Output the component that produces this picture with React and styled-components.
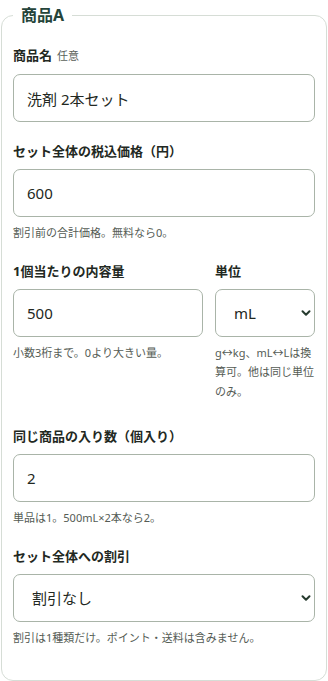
import React, { useState } from "react";
import styled, { createGlobalStyle } from "styled-components";

const GlobalStyle = createGlobalStyle`
  html, body {
    margin: 0;
    padding: 0;
    background: #ffffff;
  }
  body {
    font-family: "Noto Sans", "Noto Sans CJK JP", sans-serif;
    color: #222822;
  }
  * {
    box-sizing: border-box;
  }
`;

const Card = styled.fieldset`
  margin: 5px 1px 0;
  padding: 20px 11px 33px;
  border: 1px solid #d6ddd6;
  border-radius: 12px;
  min-width: 0;
`;

const Legend = styled.legend`
  padding: 0 8px;
  margin-left: 0;
  font-size: 16px;
  line-height: 20px;
  font-weight: 700;
  color: #25443a;
`;

const Field = styled.div`
  display: flex;
  flex-direction: column;
  min-width: 0;
  margin-bottom: ${(props) => props.$gap ?? 18}px;
`;

const Row = styled.div`
  display: grid;
  grid-template-columns: 1fr 100px;
  column-gap: 12px;
  margin-bottom: 25px;
`;

const Label = styled.label`
  display: flex;
  align-items: baseline;
  gap: 5px;
  font-size: 13px;
  line-height: 20px;
  font-weight: 700;
  color: #222822;
  margin-bottom: 8px;
  white-space: nowrap;
`;

const Optional = styled.span`
  font-size: 11px;
  font-weight: 400;
  color: #5b625b;
`;

const Input = styled.input`
  width: 100%;
  height: 48px;
  padding: 0 13px;
  border: 1px solid #a9b4a8;
  border-radius: 7px;
  background: #ffffff;
  font-family: inherit;
  font-size: 15px;
  color: #222822;
  outline: none;
`;

const SelectWrap = styled.div`
  position: relative;
`;

const Select = styled.select`
  appearance: none;
  width: 100%;
  height: 48px;
  padding: 0 28px 0 18px;
  border: 1px solid #a9b4a8;
  border-radius: 7px;
  background: #ffffff;
  font-family: inherit;
  font-size: 15px;
  color: #222822;
  outline: none;
`;

const Chevron = styled.svg`
  position: absolute;
  right: 4px;
  top: 50%;
  width: 10px;
  height: 10px;
  transform: translateY(-50%);
  pointer-events: none;
`;

const Hint = styled.p`
  margin: 6px 0 0;
  font-size: 11px;
  line-height: 19.5px;
  color: #555c55;
  line-break: anywhere;
`;

const ChevronIcon = () => (
  <Chevron viewBox="0 0 10 10">
    <path d="M1.5 3.2 L5 6.7 L8.5 3.2" fill="none" stroke="#263a2e" strokeWidth="2" strokeLinecap="round" strokeLinejoin="round" />
  </Chevron>
);

const App = () => {
  const [item, setItem] = useState({
    name: "洗剤 2本セット",
    price: "600",
    amount: "500",
    unit: "mL",
    count: "2",
    discount: "none",
  });

  const handleChange = (e) => {
    const { name, value } = e.target;
    setItem((prev) => ({ ...prev, [name]: value }));
  };

  return (
    <>
      <GlobalStyle />
      <Card>
        <Legend>商品A</Legend>

        <Field $gap={19}>
          <Label htmlFor="name">
            商品名 <Optional>任意</Optional>
          </Label>
          <Input id="name" name="name" type="text" value={item.name} onChange={handleChange} />
        </Field>

        <Field>
          <Label htmlFor="price">セット全体の税込価格（円）</Label>
          <Input id="price" name="price" type="text" value={item.price} onChange={handleChange} />
          <Hint>割引前の合計価格。無料なら0。</Hint>
        </Field>

        <Row>
          <Field $gap={0}>
            <Label htmlFor="amount">1個当たりの内容量</Label>
            <Input id="amount" name="amount" type="text" value={item.amount} onChange={handleChange} />
            <Hint>小数3桁まで。0より大きい量。</Hint>
          </Field>
          <Field $gap={0}>
            <Label htmlFor="unit">単位</Label>
            <SelectWrap>
              <Select id="unit" name="unit" value={item.unit} onChange={handleChange}>
                <option value="g">g</option>
                <option value="kg">kg</option>
                <option value="mL">mL</option>
                <option value="L">L</option>
                <option value="個">個</option>
              </Select>
              <ChevronIcon />
            </SelectWrap>
            <Hint>g↔kg、mL↔Lは換算可。他は同じ単位のみ。</Hint>
          </Field>
        </Row>

        <Field>
          <Label htmlFor="count">同じ商品の入り数（個入り）</Label>
          <Input id="count" name="count" type="text" value={item.count} onChange={handleChange} />
          <Hint>単品は1。500mL×2本なら2。</Hint>
        </Field>

        <Field $gap={0}>
          <Label htmlFor="discount">セット全体への割引</Label>
          <SelectWrap>
            <Select id="discount" name="discount" value={item.discount} onChange={handleChange}>
              <option value="none">割引なし</option>
              <option value="yen">円引き</option>
              <option value="percent">％引き</option>
            </Select>
            <ChevronIcon />
          </SelectWrap>
          <Hint>割引は1種類だけ。ポイント・送料は含みません。</Hint>
        </Field>
      </Card>
    </>
  );
};

export default App;
